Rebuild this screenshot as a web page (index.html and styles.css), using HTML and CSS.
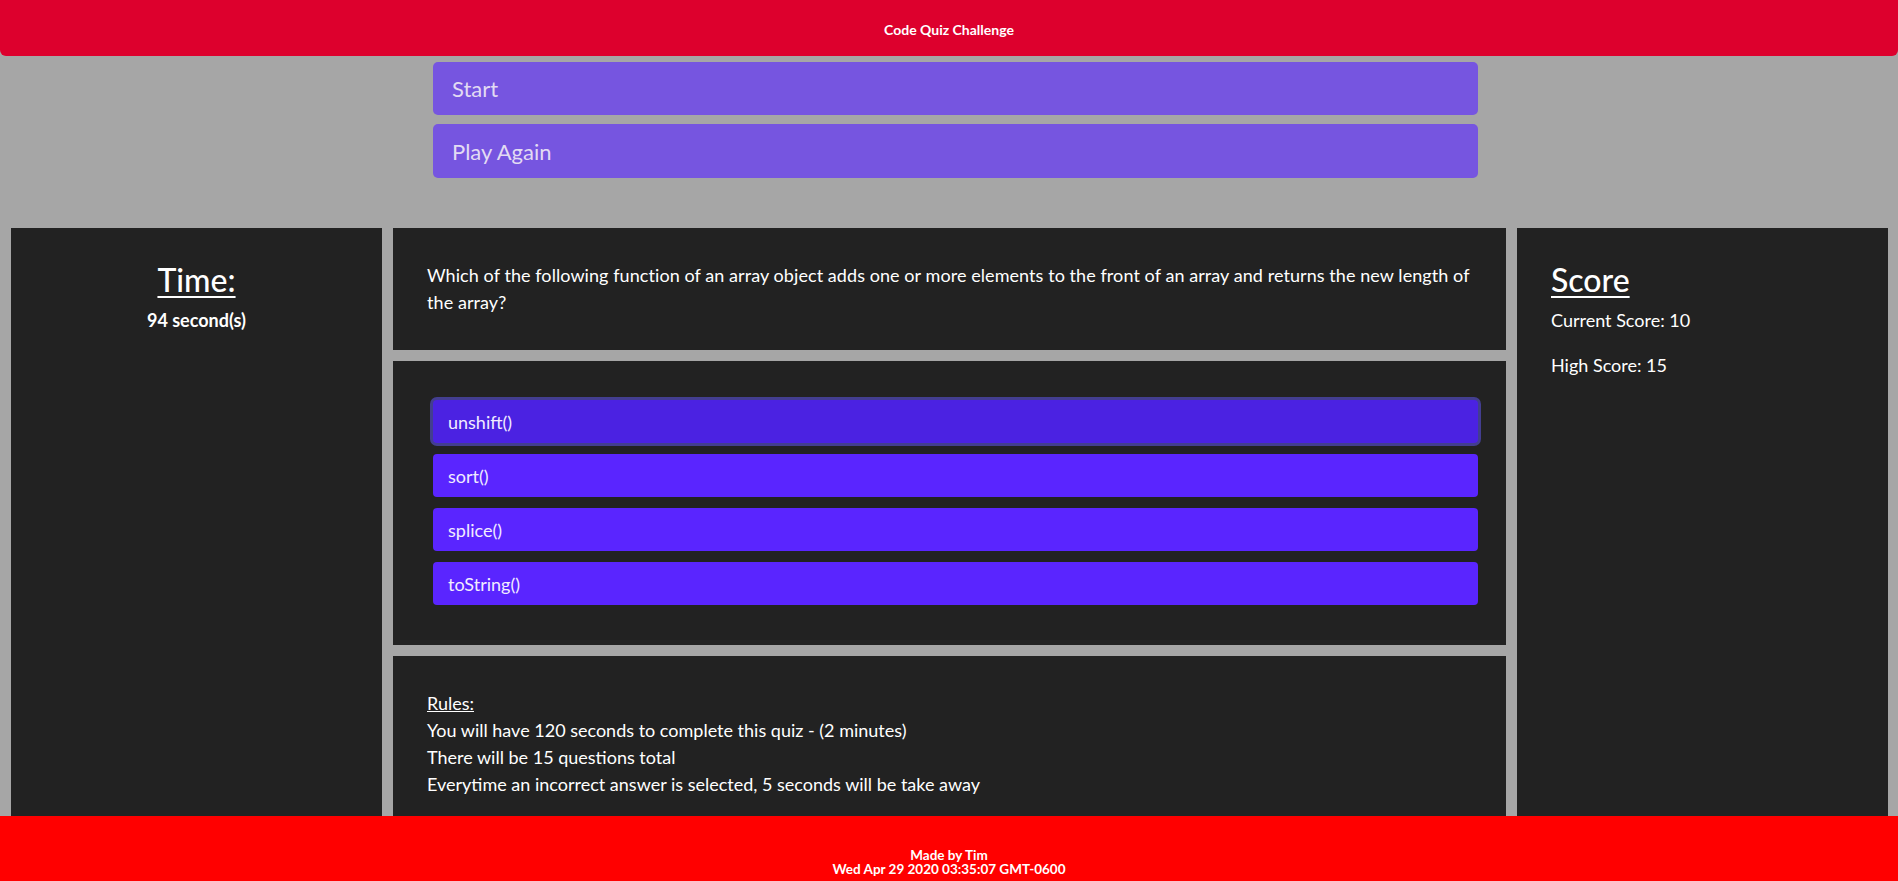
FILE: index.html
```html
<!DOCTYPE html>
<html lang="en">
<head>
<meta charset="utf-8">
<title>Code Quiz Challenge</title>
<link rel="stylesheet" href="styles.css">
</head>
<body>
<header class="topbar"><span class="topbar-title">Code Quiz Challenge</span></header>
<div class="controls">
  <button class="big-btn">Start</button>
  <button class="big-btn">Play Again</button>
</div>
<main class="board">
  <section class="panel timer">
    <h2 class="panel-title">Time:</h2>
    <p class="time-value">94 second(s)</p>
  </section>
  <div class="center-col">
    <section class="panel question">
      <p>Which of the following function of an array object adds one or more elements to the front of an array and returns the new length of the array?</p>
    </section>
    <section class="panel answers">
      <button class="answer answer-focus">unshift()</button>
      <button class="answer">sort()</button>
      <button class="answer">splice()</button>
      <button class="answer">toString()</button>
    </section>
    <section class="panel rules">
      <p><span class="rules-title">Rules:</span><br>
      You will have 120 seconds to complete this quiz - (2 minutes)<br>
      There will be 15 questions total<br>
      Everytime an incorrect answer is selected, 5 seconds will be take away</p>
    </section>
  </div>
  <section class="panel score">
    <h2 class="panel-title">Score</h2>
    <p class="score-line">Current Score: 10</p>
    <p class="score-line">High Score: 15</p>
  </section>
</main>
<footer class="footer">
  <div>Made by Tim</div>
  <div>Wed Apr 29 2020 03:35:07 GMT-0600</div>
</footer>
</body>
</html>
```
FILE: styles.css
```css
* { box-sizing: border-box; }
html, body {
  margin: 0;
  padding: 0;
}
body {
  background: #a6a6a6;
  font-family: Lato, "Open Sans", sans-serif;
  font-size: 18px;
  line-height: 27px;
  color: #ffffff;
  padding-bottom: 80px;
}
.topbar {
  height: 56px;
  background: #dd002d;
  border-radius: 0 0 6px 6px;
  display: flex;
  align-items: center;
  justify-content: center;
  padding-top: 4px;
}
.topbar-title {
  font-size: 14px;
  font-weight: 700;
  color: #ffffff;
  line-height: 16px;
}
.controls {
  width: 1045px;
  margin: 6px 0 0 433px;
  display: flex;
  flex-direction: column;
  gap: 9px;
}
.big-btn {
  height: 53px;
  border: none;
  border-radius: 5px;
  background: #7655e0;
  color: #e2dbf3;
  font-family: Lato, "Open Sans", sans-serif;
  font-size: 22px;
  text-align: left;
  padding: 0 19px;
}
.big-btn + .big-btn { height: 54px; }
.board {
  display: flex;
  align-items: stretch;
  gap: 11px;
  padding: 0 10px 0 11px;
  margin-top: 50px;
}
.panel {
  background: #222222;
}
.timer, .score {
  width: 371px;
  flex: 0 0 371px;
  padding: 32px 34px;
}
.timer { text-align: center; }
.center-col {
  flex: 0 0 1113px;
  display: flex;
  flex-direction: column;
  gap: 11px;
}
.panel-title {
  margin: 0 0 7px;
  font-size: 32px;
  line-height: 40px;
  font-weight: 500;
  text-decoration: underline;
  text-underline-offset: 4px;
  text-decoration-thickness: 2px;
}
.time-value {
  margin: 0;
  font-weight: 700;
}
.score-line {
  margin: 0 0 18px;
}
.question {
  padding: 34px 34px;
  letter-spacing: 0.07px;
}
.question p { margin: 0; }
.answers {
  padding: 39px 28px 40px 40px;
  display: flex;
  flex-direction: column;
  gap: 11px;
}
.answer {
  height: 43px;
  border: none;
  border-radius: 4px;
  background: #5a25ff;
  color: #f1ecff;
  font-family: Lato, "Open Sans", sans-serif;
  font-size: 18px;
  text-align: left;
  padding: 0 15px;
}
.answer-focus {
  background: #4b22e2;
  box-shadow: 0 0 0 3px #433e90;
}
.rules {
  padding: 34px 34px 40px;
}
.rules p { margin: 0; }
.rules-title { text-decoration: underline; }
.footer {
  position: fixed;
  left: 0;
  right: 0;
  bottom: 0;
  height: 65px;
  background: #ff0000;
  color: #ffffff;
  font-size: 13.5px;
  font-weight: 700;
  line-height: 14px;
  text-align: center;
  display: flex;
  flex-direction: column;
  justify-content: flex-end;
  padding-bottom: 5px;
}
```
